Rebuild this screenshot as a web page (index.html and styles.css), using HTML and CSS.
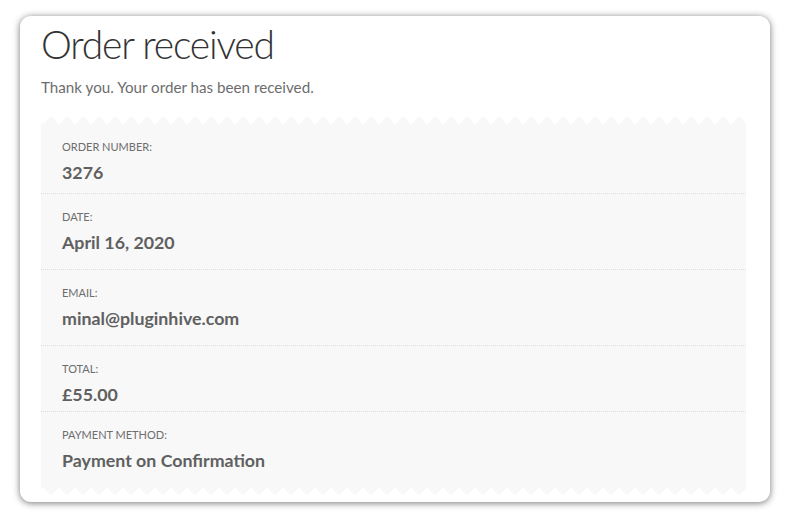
FILE: index.html
```html
<!DOCTYPE html>
<html lang="en">
<head>
<meta charset="utf-8">
<title>Order received</title>
<link rel="stylesheet" href="styles.css">
</head>
<body>
<main class="card">
  <h1 class="title">Order received</h1>
  <p class="notice">Thank you. Your order has been received.</p>
  <ul class="details">
    <li class="row row-first"><span class="label">Order number:</span><strong class="value">3276</strong></li>
    <li class="row row-tall"><span class="label">Date:</span><strong class="value">April 16, 2020</strong></li>
    <li class="row row-tall"><span class="label">Email:</span><strong class="value">minal@pluginhive.com</strong></li>
    <li class="row row-short"><span class="label">Total:</span><strong class="value">£55.00</strong></li>
    <li class="row row-last"><span class="label">Payment method:</span><strong class="value">Payment on Confirmation</strong></li>
  </ul>
</main>
</body>
</html>
```
FILE: styles.css
```css
html, body {
  margin: 0;
  padding: 0;
  background: #ffffff;
}
body {
  width: 789px;
  height: 520px;
  overflow: hidden;
  font-family: Lato, "Liberation Sans", sans-serif;
}
.card {
  box-sizing: border-box;
  width: 750px;
  height: 486px;
  margin: 16px 0 0 20px;
  padding: 8px 24px 0 21px;
  background: #ffffff;
  border-radius: 11px;
  box-shadow: 0 1px 7px rgba(0, 0, 0, 0.55);
}
.title {
  margin: 0;
  font-size: 39px;
  line-height: 40px;
  font-weight: 300;
  color: #333333;
  letter-spacing: -1.2px;
}
.notice {
  margin: 12px 0 0 0;
  font-size: 15.2px;
  line-height: 22px;
  color: #6d6d6d;
}
.details {
  position: relative;
  list-style: none;
  margin: 26px 0 0 0;
  padding: 0;
  background: #f8f8f8;
}
.details::before,
.details::after {
  content: "";
  position: absolute;
  left: 0;
  right: 0;
  height: 8px;
  background-size: 16px 8px;
  background-repeat: repeat-x;
  background-position: 2px 0;
}
.details::before {
  top: -8px;
  background-image: conic-gradient(from 135deg at 50% 0, #f8f8f8 0 90deg, transparent 90deg);
}
.details::after {
  bottom: -8px;
  background-image: conic-gradient(from -45deg at 50% 100%, #f8f8f8 0 90deg, transparent 90deg);
}
.row {
  box-sizing: border-box;
  padding: 15px 21px 0 21px;
  border-bottom: 1px dotted #dcdcdc;
}
.row-first { height: 70px; }
.row-tall { height: 76px; }
.row-short { height: 66px; }
.row-last { height: 75px; border-bottom: 0; }
.label {
  display: block;
  font-size: 11px;
  line-height: 16px;
  text-transform: uppercase;
  color: #6d6d6d;
}
.value {
  display: block;
  margin-top: 6px;
  font-size: 17.8px;
  line-height: 22px;
  font-weight: 700;
  color: #606060;
}
```
